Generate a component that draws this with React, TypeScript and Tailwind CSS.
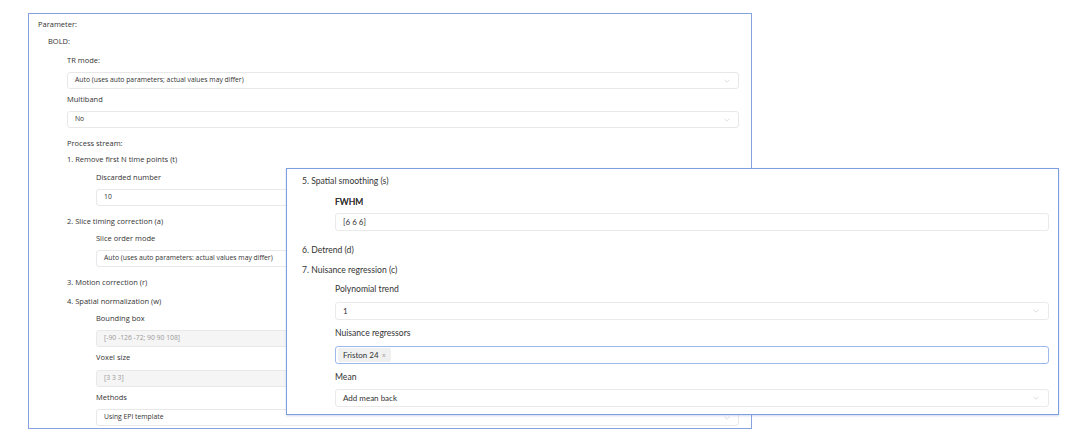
import React from 'react';

const Chevron: React.FC<{ className?: string }> = ({ className }) => (
  <svg viewBox="0 0 10 6" className={className} fill="none" stroke="currentColor" strokeWidth="1">
    <polyline points="1,1 5,5 9,1" />
  </svg>
);

const BgLabel: React.FC<{ children: React.ReactNode; className?: string }> = ({ children, className = '' }) => (
  <div className={`h-4 flex items-center text-[7.5px] text-[#333] ${className}`}>{children}</div>
);

const BgBox: React.FC<{ value: string; select?: boolean; disabled?: boolean; className?: string }> = ({
  value,
  select,
  disabled,
  className = 'mt-[3px]',
}) => (
  <div
    className={`h-[17px] mr-[12px] flex items-center justify-between rounded-[3px] border border-[#e8e8e8] pl-[7px] pr-[8px] text-[6.8px] ${
      disabled ? 'bg-[#f5f5f5] text-[#9a9a9a]' : 'bg-white text-[#333]'
    } ${className}`}
  >
    <span>{value}</span>
    {select && <Chevron className="w-[6px] h-[4px] text-[#c8c8c8]" />}
  </div>
);

const FgLabel: React.FC<{ children: React.ReactNode; className?: string }> = ({ children, className = '' }) => (
  <div className={`h-[18px] flex items-center text-[8.6px] text-[#333] ${className}`}>{children}</div>
);

const FgBox: React.FC<{ children: React.ReactNode; select?: boolean; focus?: boolean; className?: string }> = ({
  children,
  select,
  focus,
  className = '',
}) => (
  <div
    className={`h-[18px] mr-[9px] flex items-center justify-between rounded-[3px] border bg-white pr-[9px] text-[8px] text-[#333] ${
      focus ? 'border-[#9cb8ec]' : 'border-[#eaeaea]'
    } ${className}`}
  >
    {children}
    {select && <Chevron className="w-[6px] h-[4px] text-[#c8c8c8]" />}
  </div>
);

export default function App() {
  return (
    <div className="relative w-[1080px] h-[445px] bg-white overflow-hidden">
      {/* back window */}
      <div
        className="absolute left-[28px] top-[13px] w-[724px] h-[416px] border border-[#86a3e0] bg-white pl-[9px]"
        style={{ fontFamily: '"Open Sans", "Noto Sans", sans-serif' }}
      >
        <BgLabel className="mt-[3px]">Parameter:</BgLabel>
        <div className="pl-[10px]">
          <BgLabel className="mt-px">BOLD:</BgLabel>
          <div className="pl-[19px]">
            <BgLabel className="mt-[3px]">TR mode:</BgLabel>
            <BgBox value="Auto (uses auto parameters; actual values may differ)" select />
            <BgLabel className="mt-[3px]">Multiband</BgLabel>
            <BgBox value="No" select />
            <BgLabel className="mt-[8px]">Process stream:</BgLabel>
            <BgLabel>1. Remove first N time points (t)</BgLabel>
            <div className="pl-[29px]">
              <BgLabel className="mt-[2px]">Discarded number</BgLabel>
              <BgBox value="10" />
            </div>
            <BgLabel className="mt-[8px]">2. Slice timing correction (a)</BgLabel>
            <div className="pl-[29px]">
              <BgLabel className="mt-px">Slice order mode</BgLabel>
              <BgBox value="Auto (uses auto parameters: actual values may differ)" select />
            </div>
            <BgLabel className="mt-[8px]">3. Motion correction (r)</BgLabel>
            <BgLabel className="mt-[3px]">4. Spatial normalization (w)</BgLabel>
            <div className="pl-[29px]">
              <BgLabel className="mt-px">Bounding box</BgLabel>
              <BgBox value="[-90 -126 -72; 90 90 108]" disabled />
              <BgLabel className="mt-[3px]">Voxel size</BgLabel>
              <BgBox value="[3 3 3]" disabled className="mt-[4px]" />
              <BgLabel className="mt-[3px]">Methods</BgLabel>
              <BgBox value="Using EPI template" select />
            </div>
          </div>
        </div>
      </div>

      {/* front window */}
      <div
        className="absolute left-[286px] top-[168px] w-[773px] h-[247px] border-[1.5px] border-[#7d9ee0] bg-white pl-[15px] shadow-[0_1px_2px_rgba(120,150,210,0.35)]"
        style={{ fontFamily: 'Lato, "Noto Sans", sans-serif' }}
      >
        <FgLabel className="mt-[3px]">5. Spatial smoothing (s)</FgLabel>
        <div className="pl-[33px]">
          <FgLabel className="mt-[3px] text-[#222] [text-shadow:0_0_0.3px_#222]">FWHM</FgLabel>
          <FgBox className="mt-[2px] pl-[7px]">
            <span>[6 6 6]</span>
          </FgBox>
        </div>
        <FgLabel className="mt-[10px]">6. Detrend (d)</FgLabel>
        <FgLabel className="mt-[2px]">7. Nuisance regression (c)</FgLabel>
        <div className="pl-[33px]">
          <FgLabel className="mt-px">Polynomial trend</FgLabel>
          <FgBox select className="mt-[4px] pl-[7px]">
            <span>1</span>
          </FgBox>
          <FgLabel className="mt-[4px]">Nuisance regressors</FgLabel>
          <FgBox focus className="mt-[4px] pl-[2px]">
            <span className="flex h-[14px] items-center gap-[3px] rounded-[2px] bg-[#f0f0f0] px-[5px] text-[8px] text-[#333]">
              Friston 24
              <span className="text-[7px] text-[#999]">×</span>
            </span>
          </FgBox>
          <FgLabel className="mt-[4px]">Mean</FgLabel>
          <FgBox select className="mt-[3px] pl-[7px]">
            <span>Add mean back</span>
          </FgBox>
        </div>
      </div>
    </div>
  );
}
